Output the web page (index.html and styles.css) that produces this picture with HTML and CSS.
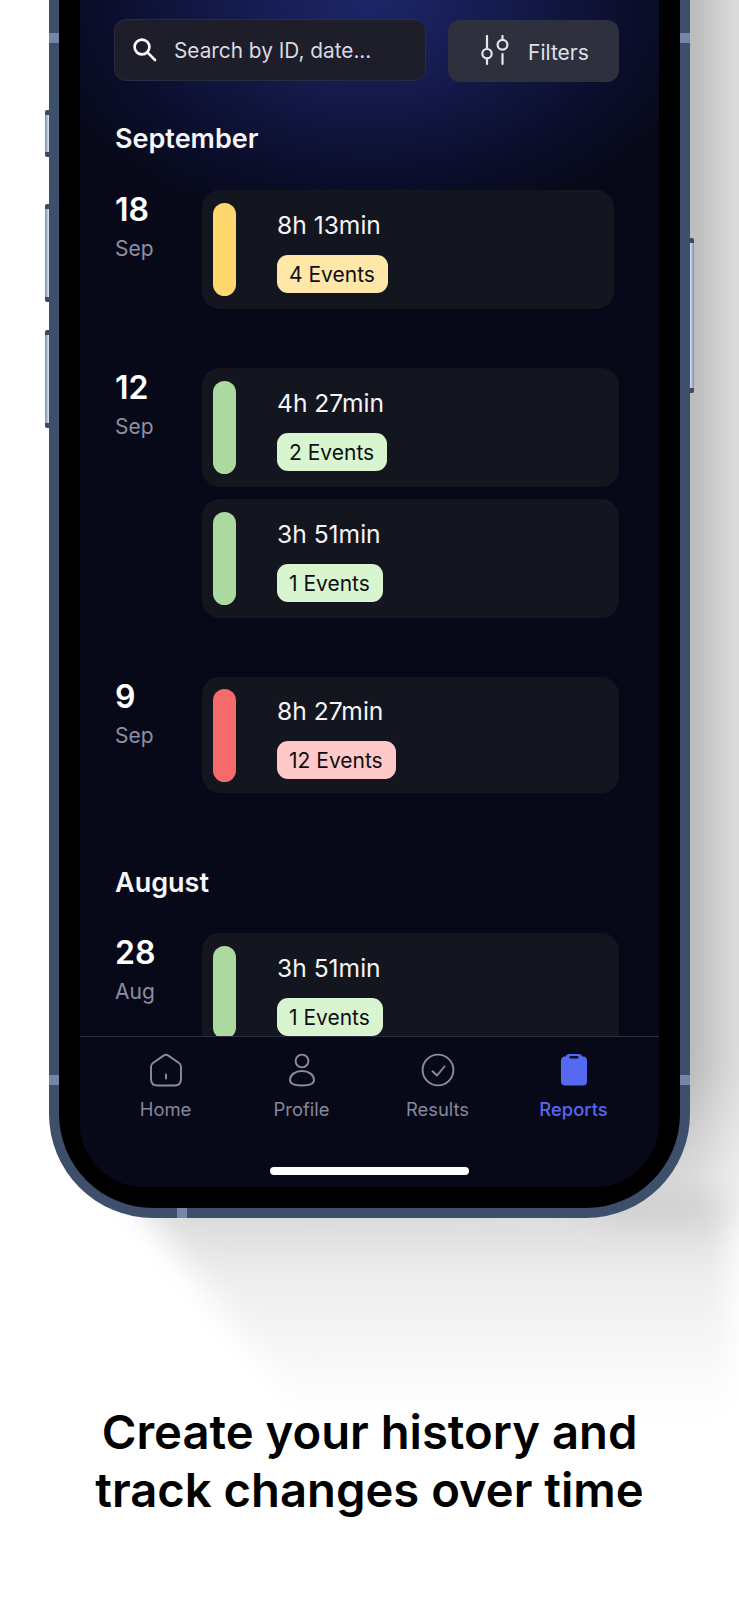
FILE: index.html
```html
<!DOCTYPE html>
<html lang="en">
<head>
    <meta charset="UTF-8">
    <title>Reports</title>
    <link rel="stylesheet" href="styles.css">
</head>
<body>
    <svg class="shadow" width="739" height="1460" viewBox="0 0 739 1460">
        <defs>
            <linearGradient id="shadowDown" x1="0" y1="0" x2="0" y2="1">
                <stop offset="0" stop-color="#d2d2d2"/>
                <stop offset="0.4" stop-color="#eeeeee"/>
                <stop offset="1" stop-color="#ffffff"/>
            </linearGradient>
            <linearGradient id="shadowSide" x1="0" y1="0" x2="1" y2="0">
                <stop offset="0.41" stop-color="#b6b6b6"/>
                <stop offset="0.63" stop-color="#e0e0e0"/>
            </linearGradient>
            <linearGradient id="sideFade" x1="0" y1="0" x2="0" y2="1">
                <stop offset="0.88" stop-color="#fff"/>
                <stop offset="1" stop-color="#555"/>
            </linearGradient>
            <mask id="sideMask" maskUnits="userSpaceOnUse" x="600" y="-40" width="220" height="1260">
                <rect x="600" y="-40" width="220" height="1260" fill="url(#sideFade)"/>
            </mask>
            <filter id="soft" x="-20%" y="-20%" width="140%" height="140%">
                <feGaussianBlur stdDeviation="15"/>
            </filter>
        </defs>
        <polygon points="125,1185 310,1420 730,1420 730,1195" fill="url(#shadowDown)" filter="url(#soft)"/>
        <g filter="url(#soft)">
            <rect x="600" y="-40" width="220" height="1260" fill="url(#shadowSide)" mask="url(#sideMask)"/>
        </g>
    </svg>

    <div class="phone">
        <span class="btn btn-mute"></span>
        <span class="btn btn-up"></span>
        <span class="btn btn-down"></span>
        <span class="btn btn-power"></span>
        <span class="band band-lt"></span>
        <span class="band band-rt"></span>
        <span class="band band-lb"></span>
        <span class="band band-rb"></span>
        <span class="band band-bottom"></span>

        <div class="screen">
            <div class="content">
                <div class="toolbar">
                    <div class="search">
                        <svg width="26" height="26" viewBox="0 0 26 26" fill="none" stroke="#fff" stroke-width="2.6">
                            <circle cx="10" cy="10" r="7.4"/>
                            <path d="M15.4 15.4 L23 23" stroke-linecap="round"/>
                        </svg>
                        <span>Search by ID, date...</span>
                    </div>
                    <div class="filters">
                        <svg width="28" height="32" viewBox="0 0 28 32" fill="none" stroke="#e6e7ed" stroke-width="2.2" stroke-linecap="round">
                            <path d="M6 1 V13 M6 23.5 V29 M21.5 1 V4 M21.5 19 V29"/>
                            <circle cx="6" cy="18.7" r="4.7"/>
                            <circle cx="21.5" cy="9.7" r="4.9"/>
                        </svg>
                        <span>Filters</span>
                    </div>
                </div>

                <h2 class="month">September</h2>

                <div class="day">
                    <div class="date"><b>18</b><span>Sep</span></div>
                    <div class="cards cards-narrow">
                        <div class="card">
                            <i class="bar bar-yellow"></i>
                            <div class="info">
                                <div class="time">8h 13min</div>
                                <div class="pill pill-yellow">4 Events</div>
                            </div>
                        </div>
                    </div>
                </div>

                <div class="day">
                    <div class="date"><b>12</b><span>Sep</span></div>
                    <div class="cards">
                        <div class="card">
                            <i class="bar bar-green"></i>
                            <div class="info">
                                <div class="time">4h 27min</div>
                                <div class="pill pill-green">2 Events</div>
                            </div>
                        </div>
                        <div class="card">
                            <i class="bar bar-green"></i>
                            <div class="info">
                                <div class="time">3h 51min</div>
                                <div class="pill pill-green">1 Events</div>
                            </div>
                        </div>
                    </div>
                </div>

                <div class="day">
                    <div class="date"><b>9</b><span>Sep</span></div>
                    <div class="cards">
                        <div class="card card-tight">
                            <i class="bar bar-red"></i>
                            <div class="info">
                                <div class="time">8h 27min</div>
                                <div class="pill pill-red">12 Events</div>
                            </div>
                        </div>
                    </div>
                </div>

                <h2 class="month month-next">August</h2>

                <div class="day">
                    <div class="date"><b>28</b><span>Aug</span></div>
                    <div class="cards">
                        <div class="card">
                            <i class="bar bar-green"></i>
                            <div class="info">
                                <div class="time">3h 51min</div>
                                <div class="pill pill-green">1 Events</div>
                            </div>
                        </div>
                    </div>
                </div>
            </div>

            <div class="tabbar">
                <div class="tabs">
                    <div class="tab">
                        <svg width="34" height="34" viewBox="0 0 34 34" fill="none" stroke="#8b8d9f" stroke-width="1.9" stroke-linecap="round" stroke-linejoin="round">
                            <path d="M14.6 2.6 Q17 1 19.4 2.6 L30 10 Q32 11.4 32 14 V26 Q32 32.5 25.5 32.5 H8.5 Q2 32.5 2 26 V14 Q2 11.4 4 10 Z"/>
                            <path d="M17 21.5 V25.5"/>
                        </svg>
                        <span>Home</span>
                    </div>
                    <div class="tab">
                        <svg width="34" height="34" viewBox="0 0 34 34" fill="none" stroke="#8b8d9f" stroke-width="1.9">
                            <circle cx="17" cy="8" r="6.4"/>
                            <path d="M17 18 C10 18 5 22 5 27 C5 31 10 32.5 17 32.5 C24 32.5 29 31 29 27 C29 22 24 18 17 18 Z"/>
                        </svg>
                        <span>Profile</span>
                    </div>
                    <div class="tab">
                        <svg width="34" height="34" viewBox="0 0 34 34" fill="none" stroke="#8b8d9f" stroke-width="1.9" stroke-linecap="round" stroke-linejoin="round">
                            <circle cx="17" cy="17" r="15.4"/>
                            <path d="M11.5 18.3 L16 22.5 L23.5 13.5"/>
                        </svg>
                        <span>Results</span>
                    </div>
                    <div class="tab tab-active">
                        <svg width="34" height="34" viewBox="0 0 34 34">
                            <path fill="#5468f2" d="M8.5 3.5 Q9.5 1 12 1 H22 Q24.5 1 25.5 3.5 H26 Q30 3.5 30 8 V28.5 Q30 32.5 26 32.5 H8 Q4 32.5 4 28.5 V8 Q4 3.5 8 3.5 Z"/>
                            <rect x="12.5" y="3" width="9" height="2.4" rx="1.2" fill="#0b0e2c"/>
                        </svg>
                        <span>Reports</span>
                    </div>
                </div>
                <div class="home-bar"></div>
            </div>
        </div>
    </div>

    <h1 class="caption">Create your history and<br>track changes over time</h1>
</body>
</html>
```

FILE: styles.css
```css
* {
    box-sizing: border-box;
}
html {
    background: #fff;
}
html, body {
    margin: 0;
    height: 1600px;
    overflow: hidden;
}
body {
    position: relative;
    font-family: Inter, 'Liberation Sans', sans-serif;
}
.shadow {
    position: absolute;
    top: 0;
    left: 0;
    z-index: -1;
}

/* device */
.phone {
    position: relative;
    width: 641px;
    height: 1218px;
    margin-left: 49px;
    padding: 0 21px 21px;
    background: #000;
    border: 10px solid #3e4f6b;
    border-top: none;
    border-radius: 0 0 104px 104px;
}
.btn {
    position: absolute;
    left: -14px;
    width: 4px;
    background:
        linear-gradient(to bottom, #3d4960 0 5px, transparent 5px calc(100% - 5px), #3d4960 calc(100% - 5px)),
        linear-gradient(to right, #7d8cab, #dde6f8);
    border-radius: 2px 0 0 2px;
}
.btn-mute { top: 110px; height: 47px; }
.btn-up { top: 204px; height: 98px; }
.btn-down { top: 330px; height: 98px; }
.btn-power {
    left: auto;
    right: -14px;
    top: 238px;
    height: 155px;
    background:
        linear-gradient(to bottom, #3d4960 0 5px, transparent 5px calc(100% - 5px), #3d4960 calc(100% - 5px)),
        linear-gradient(to left, #7d8cab, #dde6f8);
    border-radius: 0 2px 2px 0;
}
.band {
    position: absolute;
    width: 10px;
    height: 10px;
    background: #7686a8;
}
.band-lt { left: -10px; top: 33px; }
.band-rt { right: -10px; top: 33px; }
.band-lb { left: -10px; top: 1075px; }
.band-rb { right: -10px; top: 1075px; }
.band-bottom { left: 118px; bottom: -10px; }

.screen {
    display: flex;
    flex-direction: column;
    height: 100%;
    overflow: hidden;
    color: #fff;
    background: radial-gradient(ellipse 350px 235px at 50% 0, #1d2666 0, #181f58 25%, #10153e 55%, #0a0d28 80%, #070919 100%), #070919;
    border-radius: 0 0 64px 64px;
}
.content {
    flex: 1;
    min-height: 0;
    overflow: hidden;
    padding: 19px 40px 0 34px;
}

/* search row */
.toolbar {
    display: flex;
    gap: 22px;
}
.search {
    display: flex;
    align-items: center;
    gap: 16px;
    width: 312px;
    height: 62px;
    padding-left: 17px;
    color: #d9dae0;
    font-size: 20.8px;
    background: #1d1e2a;
    border: 1px solid #2a2d40;
    border-radius: 12px;
}
.filters {
    display: flex;
    align-items: center;
    gap: 19px;
    width: 171px;
    height: 62px;
    margin-top: 1px;
    padding-left: 33px;
    color: #dfe1e8;
    font-size: 21px;
    background: #2e303e;
    border-radius: 12px;
}
.filters span {
    padding-top: 2px;
}

/* list */
.month {
    margin: 41px 0 35px 1px;
    font-size: 27px;
    font-weight: 600;
    line-height: 32px;
    color: #f6f6f9;
}
.month-next {
    margin: 74px 0 34px 1px;
}
.day {
    display: flex;
    margin-bottom: 59px;
}
.date {
    display: flex;
    flex-direction: column;
    flex: none;
    width: 88px;
    padding: 2px 0 0 1px;
}
.date b {
    font-size: 32px;
    font-weight: 600;
    line-height: 36px;
}
.date span {
    margin-top: 8px;
    font-size: 21px;
    line-height: 26px;
    color: #8d8fa3;
}
.cards {
    display: flex;
    flex-direction: column;
    gap: 12px;
    width: 417px;
}
.cards-narrow {
    width: 412px;
}
.card {
    display: flex;
    gap: 41px;
    padding: 13px 11px;
    background: #14161f;
    border-radius: 18px;
}
.card-tight {
    padding-top: 12px;
    padding-bottom: 11px;
}
.bar {
    flex: none;
    width: 23px;
    height: 93px;
    border-radius: 11.5px;
}
.bar-yellow { background: #ffd76f; }
.bar-green { background: #acd9a0; }
.bar-red { background: #f56b6b; }
.info {
    display: flex;
    flex-direction: column;
    align-items: flex-start;
    justify-content: space-between;
    padding: 7px 0 3px;
}
.time {
    font-size: 24.6px;
    line-height: 30px;
    color: #f4f4f7;
}
.pill {
    height: 38px;
    padding: 0 13px 0 12px;
    font-size: 21px;
    line-height: 40px;
    color: #0d0e14;
    border-radius: 11px;
}
.pill-yellow { background: #ffe7a8; }
.pill-green { background: #d8f5cf; }
.pill-red { background: #ffc9c9; }

/* bottom nav */
.tabbar {
    flex: none;
    height: 151px;
    background: #070919;
    border-top: 1px solid #2b2d3c;
}
.tabs {
    display: flex;
    justify-content: center;
    padding-top: 16px;
}
.tab {
    display: flex;
    flex-direction: column;
    align-items: center;
    width: 136px;
    color: #85879a;
    font-size: 18.4px;
}
.tab span {
    margin-top: 9px;
    line-height: 26px;
}
.tab-active {
    color: #5468f2;
    font-weight: 500;
}
.home-bar {
    width: 199px;
    height: 8px;
    margin: 45px auto 0;
    background: #fff;
    border-radius: 4px;
}

/* caption */
.caption {
    margin: 185px 0 0;
    font-size: 47.2px;
    font-weight: 600;
    line-height: 58px;
    text-align: center;
    color: #000;
}
```
